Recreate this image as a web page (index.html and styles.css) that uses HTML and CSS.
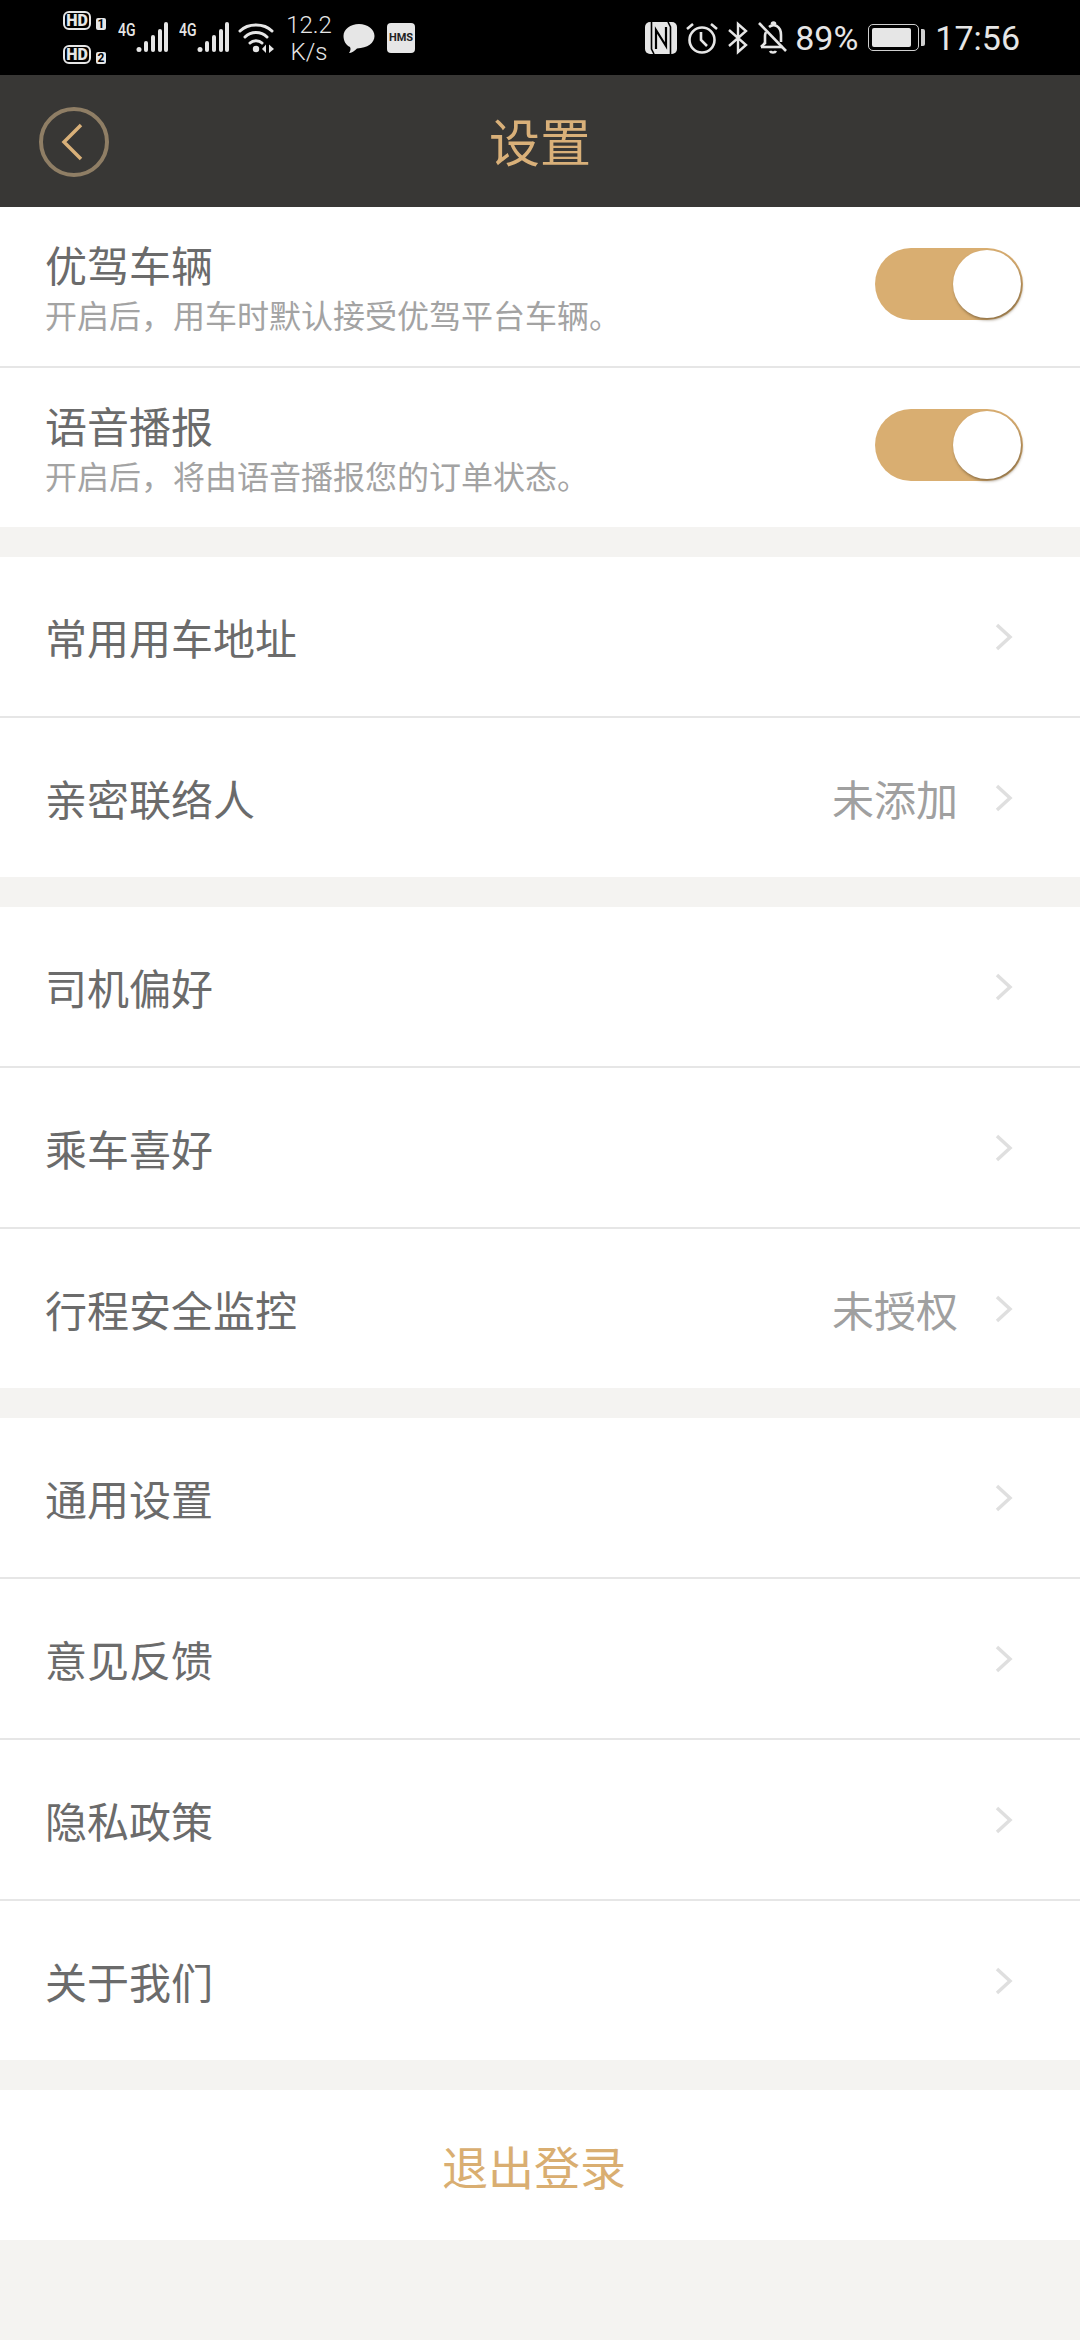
FILE: index.html
```html
<!DOCTYPE html>
<html lang="zh-CN">

<head>
    <meta charset="UTF-8">
    <meta name="viewport" content="width=device-width, initial-scale=1.0">
    <title>设置</title>
    <link rel="stylesheet" href="styles.css">
</head>

<body>
    <!-- 状态栏 -->
    <div class="status-bar">
        <div class="status-left">
            <div class="hd-stack">
                <div class="hd-line"><span class="hd">HD</span><span class="sim">1</span></div>
                <div class="hd-line"><span class="hd">HD</span><span class="sim">2</span></div>
            </div>
            <div class="signal">
                <span class="net">4G</span>
                <svg width="32" height="32" viewBox="0 0 32 32">
                    <circle cx="3" cy="27.500" r="2.500" fill="#e6e6e6" />
                    <rect x="8" y="19" width="4" height="11" rx="2" fill="#e6e6e6" />
                    <rect x="15" y="13" width="4" height="17" rx="2" fill="#e6e6e6" />
                    <rect x="22" y="7" width="4" height="23" rx="2" fill="#e6e6e6" />
                    <rect x="28" y="0" width="4" height="30" rx="2" fill="#e6e6e6" />
                </svg>
            </div>
            <div class="signal">
                <span class="net">4G</span>
                <svg width="32" height="32" viewBox="0 0 32 32">
                    <circle cx="3" cy="27.500" r="2.500" fill="#e6e6e6" />
                    <rect x="8" y="19" width="4" height="11" rx="2" fill="#e6e6e6" />
                    <rect x="15" y="13" width="4" height="17" rx="2" fill="#e6e6e6" />
                    <rect x="22" y="7" width="4" height="23" rx="2" fill="#e6e6e6" />
                    <rect x="28" y="0" width="4" height="30" rx="2" fill="#e6e6e6" />
                </svg>
            </div>
            <svg class="wifi" width="38" height="32" viewBox="0 0 38 32" fill="none" stroke="#e6e6e6" stroke-width="3" stroke-linecap="round">
                <path d="M2 9C10 1 26 1 34 9" />
                <path d="M7 15C13 9 23 9 29 15" />
                <path d="M12 21C15 18 21 18 24 21" />
                <circle cx="18" cy="27" r="3.200" fill="#e6e6e6" stroke="none" />
                <path d="M28 22.500L24 27L28 31Z" fill="#e6e6e6" stroke="none" />
                <path d="M31 22.500L36 27L31 31Z" fill="#e6e6e6" stroke="none" />
            </svg>
            <div class="speed">12.2<br>K/s</div>
            <svg class="bubble" width="32" height="32" viewBox="0 0 32 32">
                <path d="M16 1C24.500 1 31.500 6 31.500 13C31.500 20 24.500 25 14 25.500C11.500 28 8.500 30 6 30C7.500 28 8 26 7 24C3 22 0.500 18 0.500 13C0.500 6 7.500 1 16 1Z" fill="#e6e6e6" />
            </svg>
            <span class="hms">HMS</span>
        </div>
        <div class="status-right">
            <svg class="nfc" width="32" height="32" viewBox="0 0 32 32">
                <rect width="32" height="32" rx="5" fill="#e6e6e6" />
                <path d="M6.500 0V27L9 32" fill="none" stroke="#000" stroke-width="1.600" />
                <path d="M25.500 32V5L23 0" fill="none" stroke="#000" stroke-width="1.600" />
                <path d="M11 27V8L21 24V5" fill="none" stroke="#000" stroke-width="2.200" />
            </svg>
            <svg class="alarm" width="32" height="32" viewBox="0 0 32 32" fill="none" stroke="#e6e6e6" stroke-width="2.600">
                <circle cx="16" cy="18" r="12.500" />
                <path d="M15 10V18L21 24" />
                <path d="M1 7L7 2" />
                <path d="M31 7L25 2" />
            </svg>
            <svg class="bluetooth" width="20" height="34" viewBox="0 0 20 34" fill="none" stroke="#e6e6e6" stroke-width="2.400">
                <path d="M1 9L18 24L10 31V3L18 10L1 25" />
            </svg>
            <svg class="bell" width="30" height="34" viewBox="0 0 30 34" fill="none" stroke="#e6e6e6" stroke-width="2.600">
                <path d="M3 26H25" />
                <path d="M7 23V15C7 13 7.500 12 8 11" />
                <path d="M11 6C16 2 23 5 23 14V21" />
                <path d="M1 2L28 30" />
                <path d="M3 26L7 22" />
                <path d="M12 30C13 32 17 32 18 30" />
                <path d="M14 3C14 1 17 1 17 3" />
            </svg>
            <span class="percent">89%</span>
            <div class="battery"><div class="battery-level"></div></div>
            <div class="battery-cap"></div>
            <span class="clock">17:56</span>
        </div>
    </div>

    <!-- 标题栏 -->
    <div class="title-bar">
        <div class="back">
            <svg width="22" height="38" viewBox="0 0 22 38" fill="none" stroke="#d9b079" stroke-width="3.500">
                <path d="M20 2L3 19L20 36" />
            </svg>
        </div>
        <h1 class="title">设置</h1>
    </div>

    <div class="group">
        <div class="row row-switch">
            <div>
                <div class="row-name">优驾车辆</div>
                <div class="row-desc">开启后，用车时默认接受优驾平台车辆。</div>
            </div>
            <div class="switch"><div class="knob"></div></div>
        </div>
        <div class="row row-switch">
            <div>
                <div class="row-name">语音播报</div>
                <div class="row-desc">开启后，将由语音播报您的订单状态。</div>
            </div>
            <div class="switch"><div class="knob"></div></div>
        </div>
    </div>

    <div class="group">
        <div class="row">
            <div class="row-name">常用用车地址</div>
            <svg class="arrow" width="18" height="28" viewBox="0 0 18 28"><path d="M2 2L15 14L2 26" /></svg>
        </div>
        <div class="row">
            <div class="row-name">亲密联络人</div>
            <span class="row-value">未添加</span>
            <svg class="arrow" width="18" height="28" viewBox="0 0 18 28"><path d="M2 2L15 14L2 26" /></svg>
        </div>
    </div>

    <div class="group">
        <div class="row">
            <div class="row-name">司机偏好</div>
            <svg class="arrow" width="18" height="28" viewBox="0 0 18 28"><path d="M2 2L15 14L2 26" /></svg>
        </div>
        <div class="row">
            <div class="row-name">乘车喜好</div>
            <svg class="arrow" width="18" height="28" viewBox="0 0 18 28"><path d="M2 2L15 14L2 26" /></svg>
        </div>
        <div class="row">
            <div class="row-name">行程安全监控</div>
            <span class="row-value">未授权</span>
            <svg class="arrow" width="18" height="28" viewBox="0 0 18 28"><path d="M2 2L15 14L2 26" /></svg>
        </div>
    </div>

    <div class="group">
        <div class="row">
            <div class="row-name">通用设置</div>
            <svg class="arrow" width="18" height="28" viewBox="0 0 18 28"><path d="M2 2L15 14L2 26" /></svg>
        </div>
        <div class="row">
            <div class="row-name">意见反馈</div>
            <svg class="arrow" width="18" height="28" viewBox="0 0 18 28"><path d="M2 2L15 14L2 26" /></svg>
        </div>
        <div class="row">
            <div class="row-name">隐私政策</div>
            <svg class="arrow" width="18" height="28" viewBox="0 0 18 28"><path d="M2 2L15 14L2 26" /></svg>
        </div>
        <div class="row">
            <div class="row-name">关于我们</div>
            <svg class="arrow" width="18" height="28" viewBox="0 0 18 28"><path d="M2 2L15 14L2 26" /></svg>
        </div>
    </div>

    <div class="logout">退出登录</div>
</body>

</html>
```

FILE: styles.css
```css
html,
body {
    margin: 0;
    padding: 0;
}

body {
    width: 1080px;
    height: 2340px;
    overflow: hidden;
    background-color: #f4f3f1;
    font-family: "Noto Sans CJK SC", "Roboto", sans-serif;
}

/* 状态栏 */
.status-bar {
    height: 75px;
    background-color: #000;
    color: #e6e6e6;
    display: flex;
    justify-content: space-between;
    font-family: "Roboto", sans-serif;
}

.status-left {
    display: flex;
    align-items: flex-start;
    padding-left: 63px;
}

.status-right {
    display: flex;
    align-items: center;
    padding-right: 60px;
}

.hd-stack {
    display: flex;
    flex-direction: column;
    gap: 15px;
    width: 44px;
    margin-top: 11px;
}

.hd-line {
    display: flex;
    align-items: flex-end;
    gap: 5px;
    height: 19px;
}

.hd {
    width: 28px;
    height: 19px;
    box-sizing: border-box;
    border: 2px solid #e6e6e6;
    border-radius: 6px;
    font-size: 16px;
    font-weight: 900;
    line-height: 15px;
    text-align: center;
}

.sim {
    width: 10px;
    height: 12px;
    background-color: #e6e6e6;
    border-radius: 2px;
    color: #000;
    font-size: 12px;
    font-weight: 700;
    line-height: 12px;
    text-align: center;
}

.signal {
    display: flex;
    align-items: flex-start;
    width: 50px;
    height: 32px;
    margin-left: 11px;
    margin-top: 22px;
}

.net {
    width: 18px;
    font-size: 18px;
    font-weight: 500;
    line-height: 16px;
    transform: scaleX(0.78);
    transform-origin: left top;
}

.wifi {
    margin-left: 9px;
    margin-top: 22px;
}

.speed {
    width: 46px;
    margin-left: 10px;
    margin-top: 12px;
    font-size: 24px;
    font-weight: 300;
    line-height: 27px;
    text-align: center;
}

.bubble {
    margin-left: 11px;
    margin-top: 23px;
}

.hms {
    width: 28px;
    height: 30px;
    margin-left: 12px;
    margin-top: 23px;
    background-color: #e6e6e6;
    border-radius: 4px;
    color: #222;
    font-size: 11px;
    font-weight: 700;
    line-height: 30px;
    text-align: center;
}

.alarm {
    margin-left: 9px;
}

.bluetooth {
    margin-left: 10px;
}

.bell {
    margin-left: 10px;
}

.percent {
    margin-left: 7px;
    font-size: 34px;
}

.battery {
    width: 51px;
    height: 27px;
    box-sizing: border-box;
    margin-left: 10px;
    padding: 3px;
    border: 1px solid #cfcfcf;
    border-radius: 5px;
}

.battery-level {
    width: 39px;
    height: 100%;
    background-color: #e6e6e6;
    border-radius: 2px;
}

.battery-cap {
    width: 4px;
    height: 17px;
    margin-left: 2px;
    background-color: #cfcfcf;
    border-radius: 0 2px 2px 0;
}

.clock {
    margin-left: 10px;
    font-size: 34px;
}

/* 标题栏 */
.title-bar {
    position: relative;
    height: 130px;
    padding-bottom: 2px;
    background-color: #383735;
    display: flex;
    align-items: center;
    justify-content: center;
}

.back {
    position: absolute;
    left: 39px;
    top: 32px;
    width: 70px;
    height: 70px;
    box-sizing: border-box;
    border: 4px solid #8f7e65;
    border-radius: 50%;
    display: flex;
    align-items: center;
    justify-content: center;
    padding-right: 4px;
}

.title {
    margin: 0;
    color: #d9b079;
    font-size: 51px;
    font-weight: 400;
}

/* 列表 */
.group {
    background-color: #fff;
    margin-bottom: 30px;
}

.row {
    height: 159px;
    display: flex;
    align-items: center;
    padding: 0 67px 0 45px;
    border-bottom: 2px solid #e6e6e6;
}

.row:last-child {
    border-bottom: none;
}

.row-switch {
    justify-content: space-between;
}

.row-name {
    flex: 1;
    color: #6b6b6b;
    font-size: 42px;
    line-height: 55px;
}

.row-desc {
    color: #a3a3a3;
    font-size: 32px;
    line-height: 47px;
}

.row-value {
    margin-right: 37px;
    color: #a0a0a0;
    font-size: 42px;
}

.arrow {
    fill: none;
    stroke: #dfdfdf;
    stroke-width: 3.500;
}

/* 开关 */
.switch {
    position: relative;
    width: 148px;
    height: 72px;
    margin-right: -10px;
    margin-bottom: 6px;
    background-color: #d9ae71;
    border-radius: 36px;
}

.knob {
    position: absolute;
    right: 2px;
    top: 2px;
    width: 68px;
    height: 68px;
    background-color: #fff;
    border-radius: 50%;
    box-shadow: 1px 2px 3px rgba(90, 70, 40, 0.6);
}

.logout {
    height: 150px;
    padding-right: 12px;
    background-color: #fff;
    color: #d9ae71;
    font-size: 46px;
    line-height: 150px;
    text-align: center;
}
```
